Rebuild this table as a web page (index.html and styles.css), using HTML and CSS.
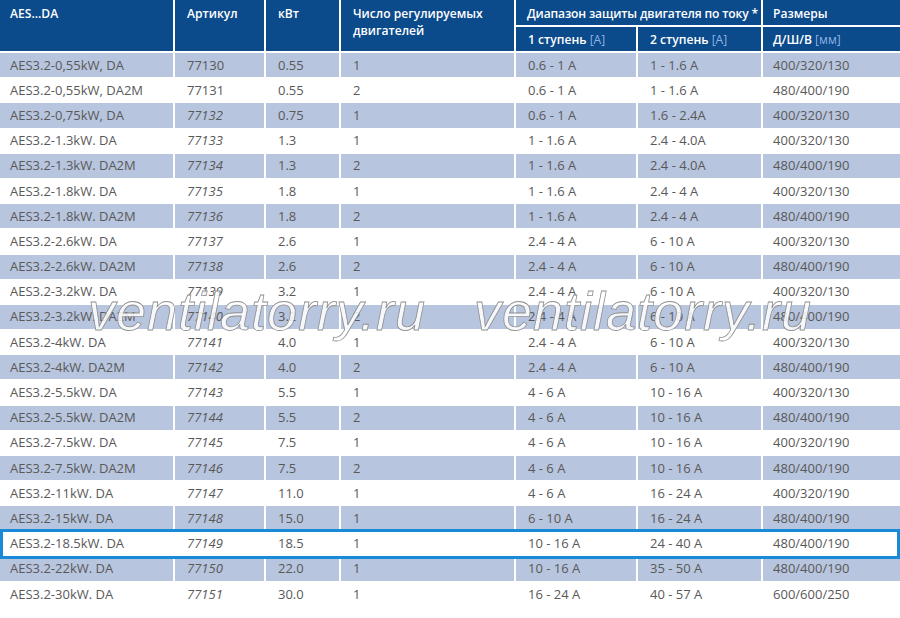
FILE: index.html
```html
<!DOCTYPE html>
<html lang="ru">
<head>
<meta charset="utf-8">
<title>AES...DA</title>
<link rel="stylesheet" href="styles.css">
</head>
<body>
<div class="sheet">
<table class="spec">
  <colgroup>
    <col class="c1"><col class="c2"><col class="c3"><col class="c4"><col class="c5"><col class="c6"><col class="c7">
  </colgroup>
  <thead>
    <tr class="h1">
      <th rowspan="2" class="first">AES...DA</th>
      <th rowspan="2">Артикул</th>
      <th rowspan="2">кВт</th>
      <th rowspan="2">Число регулируемых двигателей</th>
      <th colspan="2" class="split range">Диапазон защиты двигателя по току *</th>
      <th class="split last">Размеры</th>
    </tr>
    <tr class="h2">
      <th>1 ступень <span class="unit">[A]</span></th>
      <th>2 ступень <span class="unit">[A]</span></th>
      <th class="last">Д/Ш/В <span class="unit">[мм]</span></th>
    </tr>
  </thead>
  <tbody>
    <tr class="odd"><td>AES3.2-0,55kW, DA</td><td>77130</td><td>0.55</td><td>1</td><td>0.6 - 1 A</td><td>1 - 1.6 A</td><td>400/320/130</td></tr>
    <tr><td>AES3.2-0,55kW, DA2M</td><td>77131</td><td>0.55</td><td>2</td><td>0.6 - 1 A</td><td>1 - 1.6 A</td><td>480/400/190</td></tr>
    <tr class="odd"><td>AES3.2-0,75kW, DA</td><td class="it">77132</td><td>0.75</td><td>1</td><td>0.6 - 1 A</td><td>1.6 - 2.4A</td><td>400/320/130</td></tr>
    <tr><td>AES3.2-1.3kW. DA</td><td class="it">77133</td><td>1.3</td><td>1</td><td>1 - 1.6 A</td><td>2.4 - 4.0A</td><td>400/320/130</td></tr>
    <tr class="odd"><td>AES3.2-1.3kW. DA2M</td><td class="it">77134</td><td>1.3</td><td>2</td><td>1 - 1.6 A</td><td>2.4 - 4.0A</td><td>480/400/190</td></tr>
    <tr><td>AES3.2-1.8kW. DA</td><td class="it">77135</td><td>1.8</td><td>1</td><td>1 - 1.6 A</td><td>2.4 - 4 A</td><td>400/320/130</td></tr>
    <tr class="odd"><td>AES3.2-1.8kW. DA2M</td><td class="it">77136</td><td>1.8</td><td>2</td><td>1 - 1.6 A</td><td>2.4 - 4 A</td><td>480/400/190</td></tr>
    <tr><td>AES3.2-2.6kW. DA</td><td class="it">77137</td><td>2.6</td><td>1</td><td>2.4 - 4 A</td><td>6 - 10 A</td><td>400/320/130</td></tr>
    <tr class="odd"><td>AES3.2-2.6kW. DA2M</td><td class="it">77138</td><td>2.6</td><td>2</td><td>2.4 - 4 A</td><td>6 - 10 A</td><td>480/400/190</td></tr>
    <tr><td>AES3.2-3.2kW. DA</td><td class="it">77139</td><td>3.2</td><td>1</td><td>2.4 - 4 A</td><td>6 - 10 A</td><td>400/320/130</td></tr>
    <tr class="odd"><td>AES3.2-3.2kW. DA2M</td><td class="it">77140</td><td>3.2</td><td>2</td><td>2.4 - 4 A</td><td>6 - 10 A</td><td>480/400/190</td></tr>
    <tr><td>AES3.2-4kW. DA</td><td class="it">77141</td><td>4.0</td><td>1</td><td>2.4 - 4 A</td><td>6 - 10 A</td><td>400/320/130</td></tr>
    <tr class="odd"><td>AES3.2-4kW. DA2M</td><td class="it">77142</td><td>4.0</td><td>2</td><td>2.4 - 4 A</td><td>6 - 10 A</td><td>480/400/190</td></tr>
    <tr><td>AES3.2-5.5kW. DA</td><td class="it">77143</td><td>5.5</td><td>1</td><td>4 - 6 A</td><td>10 - 16 A</td><td>400/320/130</td></tr>
    <tr class="odd"><td>AES3.2-5.5kW. DA2M</td><td class="it">77144</td><td>5.5</td><td>2</td><td>4 - 6 A</td><td>10 - 16 A</td><td>480/400/190</td></tr>
    <tr><td>AES3.2-7.5kW. DA</td><td class="it">77145</td><td>7.5</td><td>1</td><td>4 - 6 A</td><td>10 - 16 A</td><td>400/320/190</td></tr>
    <tr class="odd"><td>AES3.2-7.5kW. DA2M</td><td class="it">77146</td><td>7.5</td><td>2</td><td>4 - 6 A</td><td>10 - 16 A</td><td>480/400/190</td></tr>
    <tr><td>AES3.2-11kW. DA</td><td class="it">77147</td><td>11.0</td><td>1</td><td>4 - 6 A</td><td>16 - 24 A</td><td>400/320/190</td></tr>
    <tr class="odd"><td>AES3.2-15kW. DA</td><td class="it">77148</td><td>15.0</td><td>1</td><td>6 - 10 A</td><td>16 - 24 A</td><td>480/400/190</td></tr>
    <tr class="sel"><td>AES3.2-18.5kW. DA</td><td class="it">77149</td><td>18.5</td><td>1</td><td>10 - 16 A</td><td>24 - 40 A</td><td>480/400/190</td></tr>
    <tr class="odd"><td>AES3.2-22kW. DA</td><td class="it">77150</td><td>22.0</td><td>1</td><td>10 - 16 A</td><td>35 - 50 A</td><td>480/400/190</td></tr>
    <tr><td>AES3.2-30kW. DA</td><td class="it">77151</td><td>30.0</td><td>1</td><td>16 - 24 A</td><td>40 - 57 A</td><td>600/600/250</td></tr>
  </tbody>
</table>
<div class="highlight"></div>
<div class="watermark wm-left">ventilatorry.ru</div>
<div class="watermark wm-right">ventilatorry.ru</div>
</div>
</body>
</html>
```
FILE: styles.css
```css
html, body {
  margin: 0;
  padding: 0;
  background: #ffffff;
  overflow: hidden;
}

.sheet {
  position: relative;
  width: 900px;
  height: 618px;
  overflow: hidden;
  font-family: "Open Sans", "Noto Sans", sans-serif;
}

.spec {
  border-collapse: separate;
  border-spacing: 2px 0;
  table-layout: fixed;
  width: 904px;
  margin-left: -2px;
  font-size: 13px;
}

.c1 { width: 173px; }
.c2 { width: 89px; }
.c3 { width: 73px; }
.c4 { width: 173px; }
.c5 { width: 120px; }
.c6 { width: 123px; }
.c7 { width: 137px; }

th {
  background: #0b4a8b;
  color: #ffffff;
  font-size: 12.1px;
  font-weight: 600;
  text-align: left;
  vertical-align: top;
  padding: 5px 0 0 12px;
  line-height: 17px;
  border-bottom: 1px solid #ffffff;
  overflow: hidden;
  white-space: nowrap;
}

th.first { padding-left: 10px; }
th.last { padding-left: 10px; }
th.range { padding-left: 11px; letter-spacing: -0.15px; }

.h1 th { height: 20px; }
.h1 th[rowspan] { white-space: normal; }
.h1 th.split { border-bottom: 2px solid #ffffff; }
.h2 th { height: 20px; padding-top: 4px; }

.unit {
  color: #8fb3e3;
  font-weight: 400;
}

td {
  box-sizing: border-box;
  height: 25.2px;
  padding: 0 4px 0 12px;
  color: #595959;
  line-height: 23px;
  border-top: 1px solid #ffffff;
  white-space: nowrap;
  overflow: hidden;
}

td:first-child { padding-left: 10px; }
td:last-child { padding-left: 10px; }

tr.odd td { background: #b8c5de; }

td.it { font-style: italic; }

.highlight {
  position: absolute;
  left: 0;
  top: 529px;
  width: 894px;
  height: 24px;
  border: 3px solid #1a8ad8;
  pointer-events: none;
}

.watermark {
  position: absolute;
  top: 281px;
  font-family: "Liberation Sans", sans-serif;
  font-style: italic;
  font-size: 54px;
  line-height: 60px;
  color: rgba(255, 255, 255, 0.85);
  -webkit-text-stroke: 0.8px #8e8e8e;
  letter-spacing: 1px;
  white-space: nowrap;
  pointer-events: none;
}

.wm-left { left: 88px; }
.wm-right { left: 474px; }
```
